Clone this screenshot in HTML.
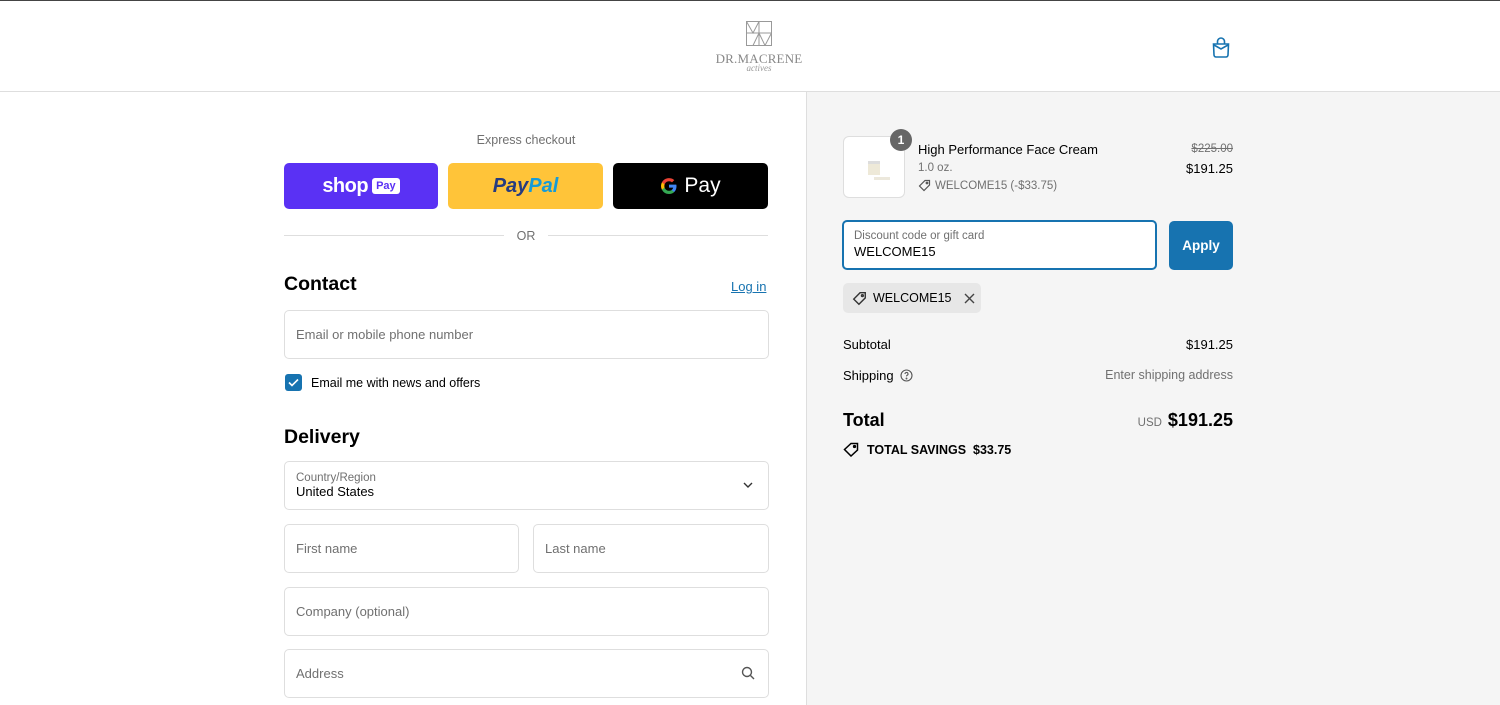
<!DOCTYPE html>
<html><head><meta charset="utf-8"><style>
*{box-sizing:border-box;margin:0;padding:0}
body{width:1500px;height:705px;overflow:hidden;font-family:"Liberation Sans",Arial,sans-serif;color:#000;background:#fff;position:relative;font-size:13px}
.top{position:absolute;left:0;top:0;width:1500px;height:1px;background:#444}
.hdr{position:absolute;top:1px;left:0;width:1500px;height:91px;border-bottom:1px solid #dedede;background:#fff}
.right{position:absolute;left:806px;top:92px;width:694px;height:613px;background:#f5f5f5;border-left:1px solid #dedede}
.abs{position:absolute}
.inp{position:absolute;border:1px solid #dedede;border-radius:5px;background:#fff;height:49px;color:#707070;font-size:13px;padding-left:11px;display:flex;align-items:center}
.sm{font-size:11.5px;color:#707070}
</style></head><body>
<div class="top"></div>
<div class="hdr">
 <svg class="abs" style="left:746px;top:20px" width="26" height="25" viewBox="0 0 26 25" fill="none" stroke="#999" stroke-width="1"><rect x="0.5" y="0.5" width="25" height="24"/><line x1="0.5" y1="12" x2="25.5" y2="12"/><line x1="13" y1="0.5" x2="13" y2="24.5"/><path d="M0.5 0.5L7 12L13 0.5M7 24.5L13 12L19 24.5L25.5 12"/></svg>
 <div class="abs" style="left:700px;top:50px;width:118px;text-align:center;font-family:'Liberation Serif',serif;color:#888;font-size:13px;letter-spacing:0.2px">DR.MACRENE</div>
 <div class="abs" style="left:700px;top:62px;width:118px;text-align:center;font-family:'Liberation Serif',serif;font-style:italic;color:#999;font-size:9px">actives</div>
 <svg class="abs" style="left:1211px;top:36px" width="20" height="21" viewBox="0 0 20 21" fill="none" stroke="#1773b0" stroke-width="1.6"><path d="M6.5 7V4.5a3.5 3.5 0 0 1 7 0V7"/><path d="M2.5 7h15l-0.5 11a2 2 0 0 1-2 2H5a2 2 0 0 1-2-2z"/><path d="M3 8l7 4 7-4"/></svg>
</div>

<div class="abs sm" style="left:284px;top:133px;width:484px;text-align:center;font-size:12.5px">Express checkout</div>
<div class="abs" style="left:284px;top:163px;width:154px;height:46px;background:#5a31f4;border-radius:5px;color:#fff;display:flex;align-items:center;justify-content:center;gap:4px"><span style="font-weight:bold;font-size:20px;letter-spacing:-0.5px">shop</span><span style="background:#fff;color:#5a31f4;font-size:11px;padding:2px 4px;border-radius:3px;font-weight:bold">Pay</span></div>
<div class="abs" style="left:448px;top:163px;width:155px;height:46px;background:#ffc439;border-radius:5px;display:flex;align-items:center;justify-content:center;font-weight:bold;font-style:italic;font-size:20px"><span style="color:#253b80">Pay</span><span style="color:#179bd7">Pal</span></div>
<div class="abs" style="left:613px;top:163px;width:155px;height:46px;background:#000;border-radius:5px;display:flex;align-items:center;justify-content:center;gap:6px;color:#fff;font-size:21px">
 <svg width="18" height="18" viewBox="0 0 18 18"><path d="M16.5 9.2c0-.6-.1-1.1-.2-1.6H9v3h4.2a3.6 3.6 0 0 1-1.6 2.4v2h2.6c1.5-1.4 2.3-3.4 2.3-5.8z" fill="#4285f4"/><path d="M9 17c2.200 0 4-.7 5.2-2l-2.6-2c-.7.5-1.6.8-2.6.8-2 0-3.8-1.4-4.4-3.2H1.9v2A8 8 0 0 0 9 17z" fill="#34a853"/><path d="M4.6 10.6a4.8 4.8 0 0 1 0-3.2v-2H1.9a8 8 0 0 0 0 7.2z" fill="#fbbc05"/><path d="M9 4.2c1.2 0 2.2.4 3 1.2l2.3-2.3A8 8 0 0 0 1.9 5.4l2.7 2C5.2 5.6 7 4.2 9 4.2z" fill="#ea4335"/></svg>Pay</div>
<div class="abs" style="left:284px;top:235px;width:220px;height:1px;background:#dedede"></div>
<div class="abs" style="left:548px;top:235px;width:220px;height:1px;background:#dedede"></div>
<div class="abs sm" style="left:504px;top:229px;width:44px;text-align:center;font-size:12.5px">OR</div>

<div class="abs" style="left:284px;top:273px;font-size:19.5px;font-weight:600">Contact</div>
<div class="abs" style="left:731px;top:279px;font-size:13px;color:#1773b0;text-decoration:underline">Log in</div>
<div class="inp" style="left:284px;top:310px;width:485px">Email or mobile phone number</div>
<div class="abs" style="left:285px;top:374px;width:17px;height:17px;background:#1773b0;border-radius:3px"><svg width="17" height="17" viewBox="0 0 17 17"><path d="M4 8.5l3 3 6-6" stroke="#fff" stroke-width="1.6" fill="none"/></svg></div>
<div class="abs" style="left:311px;top:376px;font-size:12.5px">Email me with news and offers</div>

<div class="abs" style="left:284px;top:426px;font-size:19.5px;font-weight:600">Delivery</div>
<div class="inp" style="left:284px;top:461px;width:485px;flex-direction:column;align-items:flex-start;justify-content:center"><div style="font-size:11.5px">Country/Region</div><div style="color:#000;font-size:13px">United States</div></div>
<svg class="abs" style="left:742px;top:481px" width="12" height="8" viewBox="0 0 12 8"><path d="M2 2l4 4 4-4" stroke="#333" stroke-width="1.4" fill="none"/></svg>
<div class="inp" style="left:284px;top:524px;width:235px">First name</div>
<div class="inp" style="left:533px;top:524px;width:236px">Last name</div>
<div class="inp" style="left:284px;top:587px;width:485px">Company (optional)</div>
<div class="inp" style="left:284px;top:649px;width:485px">Address</div>
<svg class="abs" style="left:741px;top:666px" width="14" height="14" viewBox="0 0 14 14" fill="none" stroke="#555" stroke-width="1.4"><circle cx="6" cy="6" r="4.5"/><path d="M9.5 9.5L13 13"/></svg>

<div class="right"></div>
<div class="abs" style="left:843px;top:136px;width:62px;height:62px;border:1px solid #dedede;border-radius:6px;background:#fff">
 <div class="abs" style="left:24px;top:24px;width:12px;height:14px;background:#eee9d8;border-top:3px solid #ddd"></div>
 <div class="abs" style="left:30px;top:40px;width:16px;height:3px;background:#ece8dc"></div></div>
<div class="abs" style="left:890px;top:129px;width:22px;height:22px;border-radius:50%;background:#666;color:#fff;font-size:12px;font-weight:bold;text-align:center;line-height:22px">1</div>
<div class="abs" style="left:918px;top:142px;font-size:13px">High Performance Face Cream</div>
<div class="abs sm" style="left:918px;top:162px">1.0 oz.</div>
<div class="abs sm" style="left:918px;top:179px;display:flex;gap:4px;align-items:center"><svg width="13" height="13" viewBox="0 0 13 13" fill="none" stroke="#555" stroke-width="1.2"><path d="M7 1.5h4.5V6L6 11.5 1.5 7z"/><circle cx="9" cy="4" r="0.8"/></svg>WELCOME15 (-$33.75)</div>
<div class="abs sm" style="left:1150px;top:143px;width:83px;text-align:right;text-decoration:line-through">$225.00</div>
<div class="abs" style="left:1150px;top:161px;width:83px;text-align:right;font-size:13px">$191.25</div>

<div class="abs" style="left:842px;top:220px;width:315px;height:50px;border:2px solid #1773b0;border-radius:5px;background:#fff;padding:8px 10px">
 <div style="font-size:11.5px;color:#707070">Discount code or gift card</div><div style="font-size:13px;margin-top:2px">WELCOME15</div></div>
<div class="abs" style="left:1169px;top:221px;width:64px;height:49px;background:#1773b0;border-radius:5px;color:#fff;font-weight:bold;font-size:13.5px;display:flex;align-items:center;justify-content:center">Apply</div>
<div class="abs" style="left:843px;top:283px;width:138px;height:30px;background:#e7e7e7;border-radius:5px;display:flex;align-items:center;padding-left:9px;gap:6px;font-size:12.5px"><svg width="15" height="15" viewBox="0 0 13 13" fill="none" stroke="#333" stroke-width="1.2"><path d="M7 1.5h4.5V6L6 11.5 1.5 7z"/><circle cx="9" cy="4" r="0.8"/></svg>WELCOME15<svg style="margin-left:6px" width="11" height="11" viewBox="0 0 11 11" stroke="#444" stroke-width="1.4"><path d="M1 1l9 9M10 1l-9 9"/></svg></div>

<div class="abs" style="left:843px;top:337px;font-size:13px">Subtotal</div>
<div class="abs" style="left:1100px;top:337px;width:133px;text-align:right;font-size:13px">$191.25</div>
<div class="abs" style="left:843px;top:368px;font-size:13px;display:flex;align-items:center;gap:6px">Shipping<svg width="13" height="13" viewBox="0 0 13 13" fill="none" stroke="#555" stroke-width="1.1"><circle cx="6.5" cy="6.5" r="5.5"/><path d="M5 5a1.5 1.5 0 1 1 2 1.4c-.4.2-.5.5-.5 1"/><circle cx="6.5" cy="9.5" r="0.4"/></svg></div>
<div class="abs" style="left:1050px;top:368px;width:183px;text-align:right;font-size:12.5px;color:#707070">Enter shipping address</div>
<div class="abs" style="left:843px;top:410px;font-size:18px;font-weight:600">Total</div>
<div class="abs" style="left:1100px;top:410px;width:133px;text-align:right"><span style="font-size:11.5px;color:#707070;margin-right:6px">USD</span><span style="font-size:18px;font-weight:bold">$191.25</span></div>
<div class="abs" style="left:843px;top:442px;font-size:12.5px;font-weight:bold;display:flex;align-items:center;gap:7px"><svg width="17" height="15" viewBox="0 0 17 15" fill="none" stroke="#000" stroke-width="1.5"><path d="M8 1.5h6.5V8L8 14 1.5 7.5z"/><circle cx="11.5" cy="4.5" r="0.9"/></svg>TOTAL SAVINGS&nbsp; $33.75</div>
</body></html>
